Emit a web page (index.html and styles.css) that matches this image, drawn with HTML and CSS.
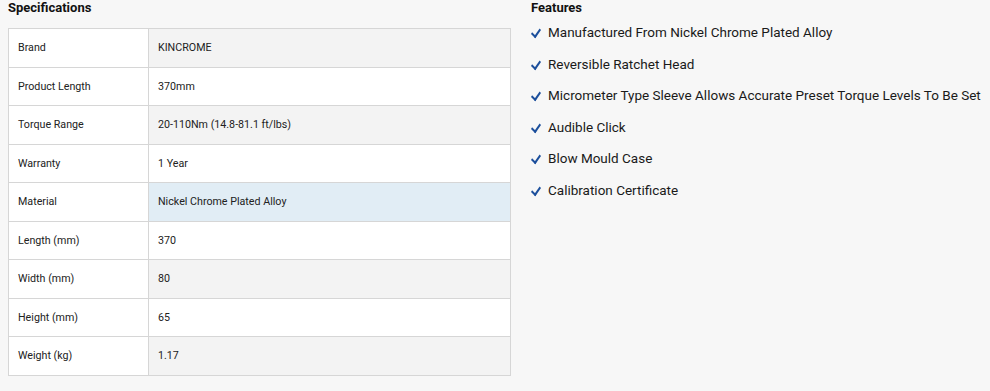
FILE: index.html
```html
<!DOCTYPE html>
<html lang="en">
<head>
    <meta charset="UTF-8">
    <title>Specifications</title>
    <link rel="stylesheet" href="styles.css">
</head>
<body>
    <div class="wrapper">
        <div class="specs">
            <h3>Specifications</h3>
            <table class="spec-table">
                <tr><td>Brand</td><td>KINCROME</td></tr>
                <tr><td>Product Length</td><td>370mm</td></tr>
                <tr><td>Torque Range</td><td>20-110Nm (14.8-81.1 ft/lbs)</td></tr>
                <tr><td>Warranty</td><td>1 Year</td></tr>
                <tr class="active"><td>Material</td><td>Nickel Chrome Plated Alloy</td></tr>
                <tr><td>Length (mm)</td><td>370</td></tr>
                <tr><td>Width (mm)</td><td>80</td></tr>
                <tr><td>Height (mm)</td><td>65</td></tr>
                <tr><td>Weight (kg)</td><td>1.17</td></tr>
            </table>
        </div>
        <div class="features">
            <h3>Features</h3>
            <ul>
                <li>Manufactured From Nickel Chrome Plated Alloy</li>
                <li>Reversible Ratchet Head</li>
                <li>Micrometer Type Sleeve Allows Accurate Preset Torque Levels To Be Set</li>
                <li>Audible Click</li>
                <li>Blow Mould Case</li>
                <li>Calibration Certificate</li>
            </ul>
        </div>
    </div>
</body>
</html>
```
FILE: styles.css
```css
body {
    margin: 0;
    background-color: #f7f7f7;
    color: #1a1a1a;
    font-family: 'Roboto', 'Liberation Sans', sans-serif;
}
.wrapper {
    display: flex;
    padding-left: 8px;
    gap: 20px;
}
.specs {
    width: 503px;
}
h3 {
    margin: 0;
    font-size: 13px;
    font-weight: 700;
    color: #111;
}
.specs h3 {
    height: 28px;
    line-height: 16px;
}
.spec-table {
    width: 100%;
    border-collapse: collapse;
    font-size: 10.7px;
    color: #222;
}
.spec-table tr {
    height: 38.5px;
}
.spec-table td {
    border: 1px solid #d6d6d6;
    padding: 0 9px;
    background-color: #ffffff;
}
.spec-table td:first-child {
    width: 121px;
}
.spec-table tr:nth-child(odd) td:last-child {
    background-color: #f3f3f3;
}
.spec-table tr.active td:last-child {
    background-color: #e1edf5;
}
.features h3 {
    line-height: 16px;
}
.features ul {
    list-style: none;
    margin: 0;
    padding: 1px 0 0 2px;
}
.features li {
    font-size: 13.5px;
    line-height: 31.6px;
}
/* thin tick like the original */
.features li::before {
    content: '';
    display: inline-block;
    width: 8px;
    height: 4px;
    border-left: 2px solid #1c4f9c;
    border-bottom: 2px solid #1c4f9c;
    transform: rotate(-55deg) skewX(-10deg);
    margin: 0 7px 3px -2px;
    vertical-align: middle;
}
```
